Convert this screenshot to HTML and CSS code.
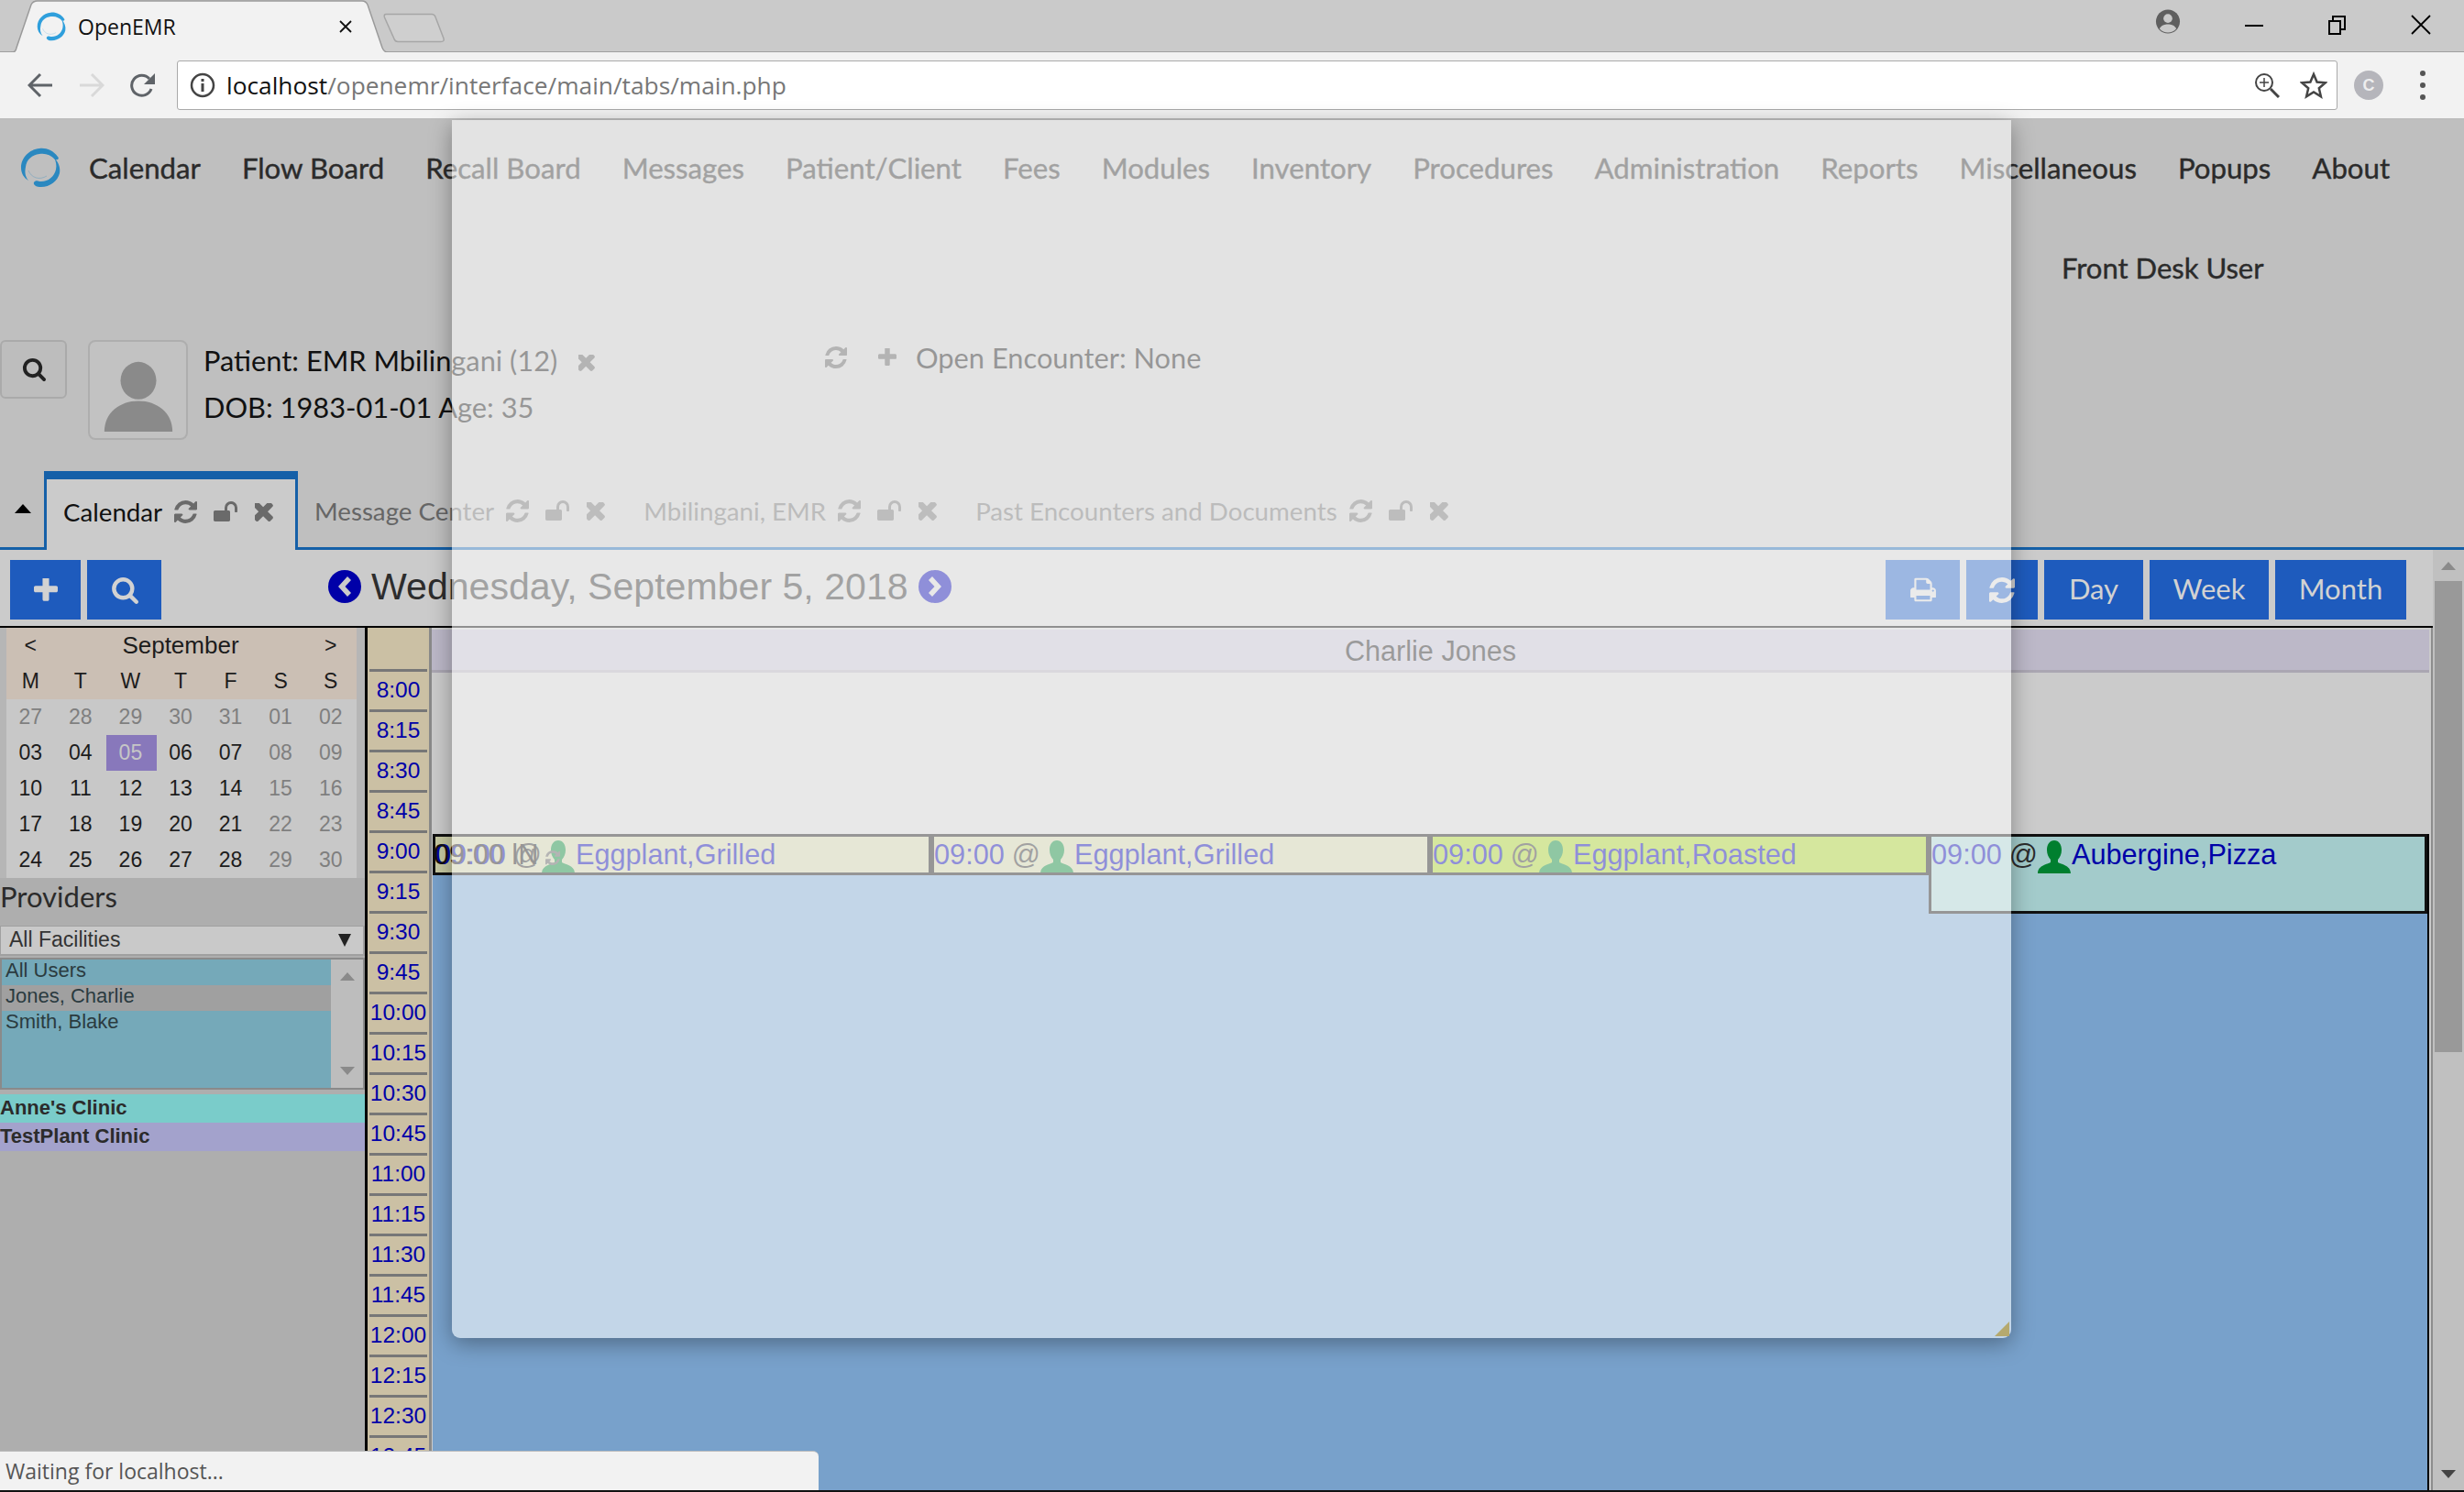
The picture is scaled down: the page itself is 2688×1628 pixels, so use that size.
FILE: index.html
```html
<!DOCTYPE html>
<html lang="en">
<head>
<meta charset="utf-8">
<title>OpenEMR</title>
<link rel="stylesheet" href="styles.css">
</head>
<body>
<svg class="defs" aria-hidden="true">
  <symbol id="i-refresh" viewBox="0 0 1536 1536"><path d="M1511 928q0 5-1 7-64 268-268 434.5t-478 166.5q-146 0-282.5-55t-243.5-157l-129 129q-19 19-45 19t-45-19-19-45v-448q0-26 19-45t45-19h448q26 0 45 19t19 45-19 45l-137 137q71 66 161 102t187 36q134 0 250-65t186-179q11-17 53-117 8-23 30-23h192q13 0 22.5 9.5t9.5 22.5zm25-800v448q0 26-19 45t-45 19h-448q-26 0-45-19t-19-45 19-45l138-138q-148-137-349-137-134 0-250 65t-186 179q-11 17-53 117-8 23-30 23h-199q-13 0-22.5-9.5t-9.5-22.5v-7q65-268 270-434.5t480-166.5q146 0 284 55.5t245 156.5l130-129q19-19 45-19t45 19 19 45z"/></symbol>
  <symbol id="i-unlock" viewBox="0 128 1728 1536"><path d="M1728 576v256q0 26-19 45t-45 19h-64q-26 0-45-19t-19-45v-256q0-106-75-181t-181-75-181 75-75 181v192h96q40 0 68 28t28 68v576q0 40-28 68t-68 28h-960q-40 0-68-28t-28-68v-576q0-40 28-68t68-28h672v-192q0-185 131.5-316.5t316.5-131.5 316.5 131.5 131.5 316.5z"/></symbol>
  <symbol id="i-times" viewBox="210 346 1088 1100"><path d="M1298 1214q0 40-28 68l-136 136q-28 28-68 28t-68-28l-294-294-294 294q-28 28-68 28t-68-28l-136-136q-28-28-28-68t28-68l294-294-294-294q-28-28-28-68t28-68l136-136q28-28 68-28t68 28l294 294 294-294q28-28 68-28t68 28l136 136q28 28 28 68t-28 68l-294 294 294 294q28 28 28 68z"/></symbol>
  <symbol id="i-plus" viewBox="192 192 1408 1408"><path d="M1600 736v192q0 40-28 68t-68 28h-416v416q0 40-28 68t-68 28h-192q-40 0-68-28t-28-68v-416h-416q-40 0-68-28t-28-68v-192q0-40 28-68t68-28h416v-416q0-40 28-68t68-28h192q40 0 68 28t28 68v416h416q40 0 68 28t28 68z"/></symbol>
  <symbol id="i-search" viewBox="0 64 1728 1728"><path d="M1216 832q0-185-131.5-316.5t-316.5-131.5-316.5 131.5-131.5 316.5 131.5 316.5 316.5 131.5 316.5-131.5 131.5-316.5zm512 832q0 52-38 90t-90 38q-54 0-90-38l-343-342q-179 124-399 124-143 0-273.5-55.5t-225-150-150-225-55.5-273.5 55.5-273.5 150-225 225-150 273.5-55.5 273.5 55.5 225 150 150 225 55.5 273.5q0 220-124 399l343 343q37 37 37 90z"/></symbol>
  <symbol id="i-print" viewBox="0 128 1792 1536"><path d="M448 1536h896v-256h-896v256zm0-640h896v-384h-160q-40 0-68-28t-28-68v-160h-640v640zm1152 64q0-26-19-45t-45-19-45 19-19 45 19 45 45 19 45-19 19-45zm128 0v416q0 13-9.5 22.5t-22.5 9.5h-224v160q0 40-28 68t-68 28h-960q-40 0-68-28t-28-68v-160h-224q-13 0-22.5-9.5t-9.5-22.5v-416q0-79 56.5-135.5t135.5-56.5h64v-544q0-40 28-68t68-28h672q40 0 88 20t76 48l152 152q28 28 48 76t20 88v256h64q79 0 135.5 56.5t56.5 135.5z"/></symbol>
  <symbol id="i-logo" viewBox="0 0 44 44"><path fill="currentColor" d="M41 10C36 3 28 0 21 1 10 2 1 11 1 22c0 6 3 11 8 14-4-5-4-10-3-15C7 13 13 8 21 7c7-1 12 1 17 6 3 1 5-1 3-3z"/><path fill="currentColor" d="M37 11c5 5 7 11 6 17-2 9-12 16-22 15-4 0-7-3-6-5 1-2 4-2 6-1 9 1 16-5 18-13 1-5 0-9-2-13z"/><path d="M9 25c3 8 12 11 20 6" fill="none" stroke="currentColor" stroke-width="1" opacity=".3"/></symbol>
  <symbol id="i-person" viewBox="0 0 36 36"><path d="M18 0c5 0 8 4.500 8 10.500 0 4-1.500 8-4 10.500v3c3 2 14 3 14 12H0c0-9 11-10 14-12v-3c-2.500-2.500-4-6.500-4-10.500C10 4.500 13 0 18 0z"/></symbol>
</svg>

<header class="chrome">
  <div class="tabstrip">
    <div class="ctab">
      <svg class="ctab-shape" viewBox="0 0 412 57" preserveAspectRatio="none"><path d="M0 57h2Q5 57 6 52L22 5Q24 1 29 1H383Q387 1 389 5L405 52Q407 57 411 57" fill="#f2f2f2" stroke="#9a9a9a" stroke-width="1.500"/></svg>
      <svg class="favicon"><use href="#i-logo"/></svg>
      <span class="ctab-title">OpenEMR</span>
      <svg class="ctab-close" viewBox="0 0 14 14"><path d="M1 1l12 12M13 1L1 13" stroke="#111" stroke-width="1.800" fill="none"/></svg>
    </div>
    <svg class="newtab" viewBox="0 0 68 33"><path d="M3 1.500H53Q56 1.500 57 4.500L66 28Q67 31.500 63 31.500H16Q13 31.500 12 28.500L1.500 5Q0.500 1.500 3 1.500z" fill="#cfcfcf" stroke="#a6a6a6" stroke-width="1.500"/></svg>
    <div class="winctl">
      <svg class="profile" viewBox="0 0 28 28"><circle cx="14" cy="14" r="13.500" fill="#5f5f5f"/><circle cx="14" cy="10.500" r="5" fill="#cacaca"/><path d="M4.500 22c2-4 6-5 9.500-5s7.500 1 9.500 5c-2.500 3-6 4.500-9.500 4.500s-7-1.500-9.500-4.500z" fill="#cacaca"/></svg>
      <svg class="wbtn" viewBox="0 0 22 22"><path d="M1 12h20" stroke="#000" stroke-width="2"/></svg>
      <svg class="wbtn" viewBox="0 0 22 22"><path d="M2 7h12v14H2zM6 7V2h13v14h-5" fill="none" stroke="#000" stroke-width="2"/></svg>
      <svg class="wbtn" viewBox="0 0 22 22"><path d="M1 1l20 20M21 1L1 21" stroke="#000" stroke-width="1.800"/></svg>
    </div>
  </div>
  <div class="toolbar">
    <svg class="nav-ico" viewBox="0 0 28 28"><path d="M27 14H3M14 2L2 14l12 12" fill="none" stroke="#5f6368" stroke-width="3"/></svg>
    <svg class="nav-ico" viewBox="0 0 28 28"><path d="M1 14h24M14 2l12 12-12 12" fill="none" stroke="#d9d9d9" stroke-width="3"/></svg>
    <svg class="nav-ico" viewBox="0 0 28 28"><path d="M23 18a11 11 0 1 1-2-11" fill="none" stroke="#5f6368" stroke-width="3"/><path d="M27 1v12H15z" fill="#5f6368"/></svg>
    <div class="omnibox">
      <svg class="info" viewBox="0 0 28 28"><circle cx="14" cy="14" r="12" fill="none" stroke="#444" stroke-width="2.500"/><path d="M12.500 7h3v3h-3zM12.500 12h3v9h-3z" fill="#444"/></svg>
      <span class="url"><span class="url-host">localhost</span>/openemr/interface/main/tabs/main.php</span>
      <svg class="zoomi" viewBox="0 0 28 28"><circle cx="11" cy="11" r="9" fill="none" stroke="#444" stroke-width="2"/><path d="M11 6v10M6 11h10" stroke="#444" stroke-width="1.500"/><path d="M18 18l9 9" stroke="#444" stroke-width="3"/></svg>
      <svg class="star" viewBox="0 0 30 30"><path d="M15 3l3.600 8.500 9.200.8-7 6 2.100 9L15 22.500l-7.900 4.800 2.100-9-7-6 9.200-.8z" fill="none" stroke="#444" stroke-width="2.500"/></svg>
    </div>
    <span class="ext">C</span>
    <span class="dots"><i></i><i></i><i></i></span>
  </div>
</header>

<div class="page">
  <nav class="mainnav">
    <svg class="logo"><use href="#i-logo"/></svg>
    <ul class="menu">
      <li>Calendar</li><li>Flow Board</li><li>Recall Board</li><li>Messages</li><li>Patient/Client</li><li>Fees</li><li>Modules</li><li>Inventory</li><li>Procedures</li><li>Administration</li><li>Reports</li><li>Miscellaneous</li><li>Popups</li><li>About</li>
    </ul>
  </nav>
  <div class="userrow">Front Desk User</div>
  <section class="patient">
    <button class="psearch"><svg class="ico ico-psearch"><use href="#i-search"/></svg></button>
    <div class="avatar">
      <svg viewBox="0 0 80 84"><ellipse cx="40" cy="24" rx="21" ry="22"/><path d="M0 84c0-22 18-36 40-36s40 14 40 36z"/></svg>
    </div>
    <div class="pinfo">
      <div class="pline">Patient: EMR Mbilingani (12)<svg class="ico ico-px"><use href="#i-times"/></svg></div>
      <div class="pline">DOB: 1983-01-01 Age: 35</div>
    </div>
    <div class="encounter">
      <svg class="ico ico-enc"><use href="#i-refresh"/></svg>
      <svg class="ico ico-enc-plus"><use href="#i-plus"/></svg>
      <span>Open Encounter: None</span>
    </div>
  </section>
  <div class="tabs">
    <span class="caret"></span>
    <div class="tab active">Calendar
      <svg class="ico ico-r"><use href="#i-refresh"/></svg><svg class="ico ico-l"><use href="#i-unlock"/></svg><svg class="ico ico-x"><use href="#i-times"/></svg>
    </div>
    <div class="tab">Message Center
      <svg class="ico ico-r"><use href="#i-refresh"/></svg><svg class="ico ico-l"><use href="#i-unlock"/></svg><svg class="ico ico-x"><use href="#i-times"/></svg>
    </div>
    <div class="tab">Mbilingani, EMR
      <svg class="ico ico-r"><use href="#i-refresh"/></svg><svg class="ico ico-l"><use href="#i-unlock"/></svg><svg class="ico ico-x"><use href="#i-times"/></svg>
    </div>
    <div class="tab">Past Encounters and Documents
      <svg class="ico ico-r"><use href="#i-refresh"/></svg><svg class="ico ico-l"><use href="#i-unlock"/></svg><svg class="ico ico-x"><use href="#i-times"/></svg>
    </div>
  </div>

  <div class="work">
    <div class="frame">
      <div class="calbar">
        <div class="btn-group">
          <button class="cbtn cbtn-add"><svg class="ico ico-plus"><use href="#i-plus"/></svg></button>
          <button class="cbtn cbtn-find"><svg class="ico ico-find"><use href="#i-search"/></svg></button>
        </div>
        <div class="datehead">
          <svg class="arrow" viewBox="0 0 36 36"><circle cx="18" cy="18" r="18" fill="#0000a8"/><path d="M21 7l-10 11 10 11 4-4-6.500-7 6.500-7z" fill="#cbcbcb"/></svg>
          <span class="datetext">Wednesday, September 5, 2018</span>
          <svg class="arrow" viewBox="0 0 36 36"><circle cx="18" cy="18" r="18" fill="#0000a8"/><path d="M15 7l10 11-10 11-4-4 6.500-7L11 11z" fill="#cbcbcb"/></svg>
        </div>
        <div class="btn-group btn-right">
          <button class="cbtn cbtn-print"><svg class="ico ico-print"><use href="#i-print"/></svg></button>
          <button class="cbtn cbtn-reload"><svg class="ico ico-reload"><use href="#i-refresh"/></svg></button>
          <button class="cbtn cbtn-text cbtn-day">Day</button>
          <button class="cbtn cbtn-text cbtn-week">Week</button>
          <button class="cbtn cbtn-text cbtn-month">Month</button>
        </div>
      </div>
      <div class="calbody">
        <aside class="sidebar">
          <div class="minical-wrap">
            <table class="minical">
              <thead>
                <tr class="mc-month"><th>&lt;</th><th colspan="5" class="mc-name">September</th><th>&gt;</th></tr>
                <tr class="mc-dow"><th>M</th><th>T</th><th>W</th><th>T</th><th>F</th><th>S</th><th>S</th></tr>
              </thead>
              <tbody>
                <tr><td class="dim">27</td><td class="dim">28</td><td class="dim">29</td><td class="dim">30</td><td class="dim">31</td><td class="dim">01</td><td class="dim">02</td></tr>
                <tr><td>03</td><td>04</td><td class="sel">05</td><td>06</td><td>07</td><td class="dim">08</td><td class="dim">09</td></tr>
                <tr><td>10</td><td>11</td><td>12</td><td>13</td><td>14</td><td class="dim">15</td><td class="dim">16</td></tr>
                <tr><td>17</td><td>18</td><td>19</td><td>20</td><td>21</td><td class="dim">22</td><td class="dim">23</td></tr>
                <tr><td>24</td><td>25</td><td>26</td><td>27</td><td>28</td><td class="dim">29</td><td class="dim">30</td></tr>
              </tbody>
            </table>
          </div>
          <div class="prov-title">Providers</div>
          <div class="fac-select">All Facilities<span class="sel-arrow"></span></div>
          <div class="listbox">
            <ul class="options">
              <li>All Users</li>
              <li class="opt-sel">Jones, Charlie</li>
              <li>Smith, Blake</li>
            </ul>
            <div class="lb-scroll"><span class="tri-up"></span><span class="tri-down"></span></div>
          </div>
          <div class="clinic clinic-a">Anne's Clinic</div>
          <div class="clinic clinic-b">TestPlant Clinic</div>
        </aside>
        <div class="times">
          <div class="slot-head"></div>
          <div class="slot">8:00</div><div class="slot">8:15</div><div class="slot">8:30</div><div class="slot">8:45</div>
          <div class="slot">9:00</div><div class="slot">9:15</div><div class="slot">9:30</div><div class="slot">9:45</div>
          <div class="slot">10:00</div><div class="slot">10:15</div><div class="slot">10:30</div><div class="slot">10:45</div>
          <div class="slot">11:00</div><div class="slot">11:15</div><div class="slot">11:30</div><div class="slot">11:45</div>
          <div class="slot">12:00</div><div class="slot">12:15</div><div class="slot">12:30</div><div class="slot">12:45</div>
        </div>
        <div class="day">
          <div class="day-head">Charlie Jones</div>
          <div class="day-blank"></div>
          <div class="day-grid">
            <div class="ev ev-a">
              <span class="ev-under">09:00 lN<svg class="ico ico-evr"><use href="#i-refresh"/></svg></span>
              <span class="ev-t">09:00</span> <span class="ev-at">@</span><svg class="evp"><use href="#i-person"/></svg><span class="ev-t">Eggplant,Grilled</span>
            </div>
            <div class="ev ev-a"><span class="ev-t">09:00</span> <span class="ev-at">@</span><svg class="evp"><use href="#i-person"/></svg><span class="ev-t">Eggplant,Grilled</span></div>
            <div class="ev ev-b"><span class="ev-t">09:00</span> <span class="ev-at">@</span><svg class="evp"><use href="#i-person"/></svg><span class="ev-t">Eggplant,Roasted</span></div>
            <div class="ev ev-c"><span class="ev-t">09:00</span> <span class="ev-at">@</span><svg class="evp"><use href="#i-person"/></svg><span class="ev-t">Aubergine,Pizza</span></div>
          </div>
        </div>
      </div>
    </div>
    <div class="vscroll">
      <span class="vs-up"></span>
      <span class="vs-thumb"></span>
      <span class="vs-down"></span>
    </div>
  </div>

  <div class="modal"><span class="grip"></span></div>
  <div class="status">Waiting for localhost...</div>
</div>
</body>
</html>
```
FILE: styles.css
```css
* { box-sizing: border-box; }
html, body { margin: 0; padding: 0; }
body { width: 2688px; height: 1628px; overflow: hidden; display: flex; flex-direction: column; font-family: "Lato", sans-serif; background: #000; }
.defs { display: none; }
.ico { display: block; fill: currentColor; flex: none; }
button { border: 0; padding: 0; margin: 0; font: inherit; }
ul { list-style: none; margin: 0; padding: 0; }

/* browser chrome */
.chrome { flex: none; height: 131px; }
.tabstrip { height: 57px; background: #cacaca; border-bottom: 1px solid #9f9f9f; display: flex; position: relative; padding-left: 12px; }
.ctab { position: relative; width: 412px; height: 57px; display: flex; align-items: center; padding: 0 40px 0 28px; }
.ctab-shape { position: absolute; left: 0; top: 0; width: 412px; height: 57px; }
.favicon { position: relative; width: 32px; height: 32px; color: #2f9fdc; }
.ctab-title { position: relative; margin-left: 13px; font: 23px "Open Sans", sans-serif; color: #111; flex: 1; }
.ctab-close { position: relative; width: 14px; height: 14px; }
.newtab { width: 68px; height: 33px; margin: 14px 0 0 -6px; }
.winctl { margin-left: auto; display: flex; align-items: flex-start; padding: 10px 36px 0 0; }
.profile { width: 28px; height: 27px; margin-right: 69px; }
.wbtn { width: 22px; height: 22px; margin: 6px 0 0 69px; }
.profile + .wbtn { margin-left: 0; }
.toolbar { height: 74px; background: #f2f2f2; border-bottom: 2px solid #bdbdbd; display: flex; align-items: center; padding: 0 0 0 30px; }
.nav-ico { width: 28px; height: 28px; margin-right: 28px; flex: none; }
.omnibox { width: 2357px; height: 54px; margin-left: -5px; background: #fff; border: 1px solid #a9a9a9; border-radius: 3px; display: flex; align-items: center; padding: 0 10px 0 13px; }
.info { width: 28px; height: 28px; flex: none; }
.url { margin-left: 12px; font: 26.300px "Open Sans", sans-serif; color: #777; flex: 1; white-space: nowrap; }
.url-host { color: #111; }
.zoomi { width: 28px; height: 28px; flex: none; }
.star { width: 30px; height: 30px; margin-left: 22px; flex: none; }
.ext { width: 32px; height: 32px; border-radius: 50%; background: #b5b5bb; color: #eee; font: bold 18px/32px "Liberation Sans", sans-serif; text-align: center; margin-left: 18px; flex: none; }
.dots { display: flex; flex-direction: column; gap: 7px; margin-left: 40px; }
.dots i { width: 6px; height: 6px; border-radius: 50%; background: #555; display: block; }

/* page */
.page { flex: 1; position: relative; background: #bfbfbf; display: flex; flex-direction: column; border-bottom: 2px solid #111; min-height: 0; }
.mainnav { flex: none; height: 104px; display: flex; align-items: center; padding-left: 22px; }
.logo { width: 44px; height: 44px; color: #2a88c0; flex: none; }
.menu { display: flex; gap: 45px; margin-left: 31px; }
.menu li { font-size: 31.200px; color: #2b2b2b; white-space: nowrap; -webkit-text-stroke: .4px #2b2b2b; }
.userrow { flex: none; height: 116px; line-height: 114px; padding-left: 2249px; font-size: 31px; color: #2b2b2b; -webkit-text-stroke: .4px #2b2b2b; }
.patient { flex: none; height: 163px; display: flex; align-items: flex-start; padding-top: 20px; }
.psearch { width: 73px; height: 64px; background: #bdbdbd; border: 2px solid #aaa; border-radius: 6px; display: flex; align-items: center; justify-content: center; color: #222; }
.ico-psearch { width: 26px; height: 26px; }
.avatar { width: 109px; height: 109px; margin-left: 23px; border: 2px solid #aeaeae; border-radius: 8px; background: #c2c2c2; padding: 20px 14px 8px; }
.avatar svg { display: block; width: 78px; height: 78px; fill: #8a8a8a; }
.pinfo { margin: -3px 0 0 17px; width: 678px; }
.pline { font-size: 30.800px; color: #111; height: 51px; line-height: 46px; display: flex; align-items: center; }
.ico-px { width: 18px; height: 18px; margin-left: 23px; color: #555; margin-top: 4px; }
.encounter { display: flex; align-items: center; font-size: 30.800px; color: #111; height: 42px; margin-top: -2px; }
.ico-enc { width: 24px; height: 24px; color: #555; }
.ico-enc-plus { width: 20px; height: 20px; color: #555; margin-left: 34px; }
.encounter span { margin-left: 21px; }

.tabs { flex: none; height: 86px; display: flex; align-items: flex-start; border-bottom: 3px solid #1560a8; padding-left: 16px; position: relative; }
.caret { width: 0; height: 0; border: 9px solid transparent; border-top: 0; border-bottom: 10px solid #000; margin: 36px 14px 0 0; }
.tab { display: flex; align-items: center; font-size: 27.700px; color: #666; height: 84px; padding: 3px 0 0 0; margin-right: 42px; white-space: nowrap; }
.tab .ico { color: #6a6a6a; }
.tab.active { background: #cbcbcb; border: 3px solid #1560a8; border-top-width: 9px; border-bottom: 0; height: 86px; width: 277px; color: #111; padding: 0 0 6px 18px; margin-right: 18px; }
.ico-r { width: 25px; height: 25px; margin-left: 13px; }
.ico-l { width: 27px; height: 24px; margin-left: 17px; }
.ico-x { width: 20px; height: 20px; margin-left: 19px; }

.work { flex: 1; display: flex; min-height: 0; }
.frame { flex: 1; display: flex; flex-direction: column; min-width: 0; background: #cbcbcb; }
.calbar { flex: none; height: 85px; border-bottom: 2px solid #000; display: flex; align-items: flex-start; padding: 11px 29px 0 11px; }
.btn-group { display: flex; gap: 7px; }
.btn-right { margin-left: auto; }
.cbtn { height: 65px; background: #1e5bbd; color: #d2d2d2; font: 31px "Lato", sans-serif; display: flex; align-items: center; justify-content: center; }
.cbtn-text { padding-bottom: 4px; }
.cbtn-add { width: 77px; }
.cbtn-find { width: 81px; }
.cbtn-print { width: 81px; }
.cbtn-reload { width: 78px; }
.cbtn-day { width: 108px; }
.cbtn-week { width: 130px; }
.cbtn-month { width: 143px; }
.ico-plus { width: 26px; height: 26px; }
.ico-find { width: 30px; height: 30px; }
.ico-print { width: 30px; height: 27px; }
.ico-reload { width: 28px; height: 28px; }
.datehead { display: flex; align-items: center; height: 58px; margin-left: 182px; gap: 11px; }
.arrow { width: 36px; height: 36px; flex: none; }
.datetext { font: 41.100px "Liberation Sans", sans-serif; color: #2d2d2d; white-space: nowrap; }

.calbody { flex: 1; display: flex; min-height: 0; }
.sidebar { flex: none; width: 398px; background: #aeaeae; display: flex; flex-direction: column; font-family: "Liberation Sans", sans-serif; }
.minical-wrap { background: #b6b6b6; padding: 0 9px 0 7px; }
.minical { width: 100%; border-collapse: collapse; table-layout: fixed; font-size: 23px; color: #1c1c1c; }
.minical th { font-weight: 400; background: #cbbfb4; padding: 0 2px 0 0; }
.minical .mc-name { font-size: 26px; }
.mc-month th { height: 39px; }
.mc-dow th { height: 39px; }
.minical td { height: 39px; padding: 0 2px 0 0; text-align: center; background: #c8c8c8; }
.minical td.dim { color: #7f7f7f; }
.minical td.sel { background: #8878bb; color: #c6c6c6; }
.prov-title { font: 31px/36px "Lato", sans-serif; color: #2b2b2b; height: 52px; padding-top: 2px; }
.fac-select { height: 33px; background: #c9c9c9; border: 2px solid #a0a0a0; border-left-width: 1px; border-top-width: 1px; font-size: 23px; line-height: 29px; padding-left: 9px; color: #333; position: relative; }
.sel-arrow { position: absolute; right: 13px; top: 8px; width: 0; height: 0; border: 7px solid transparent; border-bottom: 0; border-top: 14px solid #222; }
.listbox { height: 144px; margin-top: 2px; border: 2px solid #8a8a8a; background: #75a9b9; display: flex; }
.options { flex: 1; font-size: 22px; color: #2b3b40; }
.options li { height: 28px; line-height: 23px; padding-left: 4px; }
.options li.opt-sel { background: #a0a0a0; }
.lb-scroll { width: 35px; background: #bdbdbd; display: flex; flex-direction: column; justify-content: space-between; align-items: center; padding: 14px 0 14px; }
.tri-up { width: 0; height: 0; border: 8px solid transparent; border-top: 0; border-bottom: 9px solid #8a8a8a; }
.tri-down { width: 0; height: 0; border: 8px solid transparent; border-bottom: 0; border-top: 9px solid #8a8a8a; }
.clinic { height: 31px; line-height: 30px; font-size: 22px; font-weight: 700; color: #2b2b2b; }
.clinic-a { background: #7accca; margin-top: 5px; }
.clinic-b { background: #a3a2cc; }

.times { flex: none; width: 73px; background: #cbc0a4; border-left: 3px solid #000; border-right: 3px solid #8a8a8a; overflow: hidden; font: 24.500px "Liberation Sans", sans-serif; color: #0000a8; padding: 0 2px; }
.slot-head { height: 48px; border-bottom: 3px solid #777; }
.slot { height: 44px; line-height: 40px; border-bottom: 3px solid #777; text-align: center; white-space: nowrap; }
.day { flex: 1; min-width: 0; display: flex; flex-direction: column; background: #cbcbcb; font-family: "Liberation Sans", sans-serif; padding-right: 2px; border-right: 2px solid #8d8d8d; }
.day-head { flex: none; height: 47px; margin-top: 2px; padding-bottom: 2px; background: #bcb8c8; border-bottom: 3px solid #aaa6b2; text-align: center; font-size: 30.600px; line-height: 46px; color: #1a1a1a; }
.day-blank { flex: none; height: 176px; }
.day-grid { flex: 1; background: #78a1cb; display: flex; align-items: flex-start; margin-left: 1px; border-right: 2px solid #000; }
.ev { position: relative; flex: 1 1 0; height: 45px; border: 3px solid #111; font-size: 30.700px; line-height: 40px; padding-left: 0; white-space: nowrap; color: #2b2b2b; overflow: hidden; display: flex; align-items: flex-start; }
.ev-a { background: #c6c8a1; }
.ev-b { background: #9fc822; }
.ev-c { background: #a3cbcb; height: 87px; }
.ev-t { color: #0000a8; }
.ev-at { margin-left: 8px; }
.evp { width: 36px; height: 36px; fill: #007f2f; margin-top: 4px; flex: none; }
.evp + .ev-t { margin-left: 1px; }
.ev-under { position: absolute; left: -2px; top: 0; color: #111; display: flex; align-items: center; height: 40px; }
.ico-evr { width: 16px; height: 16px; color: #555; margin-left: 8px; margin-top: 6px; }

.vscroll { flex: none; width: 34px; background: #c0c0c0; display: flex; flex-direction: column; align-items: center; position: relative; }
.vs-up { width: 0; height: 0; border: 8px solid transparent; border-top: 0; border-bottom: 9px solid #8a8a8a; margin-top: 13px; }
.vs-thumb { width: 30px; height: 514px; background: #999; margin-top: 12px; }
.vs-down { width: 0; height: 0; border: 8px solid transparent; border-bottom: 0; border-top: 9px solid #444; margin-top: auto; margin-bottom: 13px; }

/* dialog and status bubble float over the page */
.modal { position: absolute; left: 493px; top: 0; width: 1701px; height: 1329px; background: rgba(255,255,255,.56); border-radius: 0 0 9px 9px; box-shadow: 0 6px 24px rgba(0,0,0,.35); }
.grip { position: absolute; right: 2px; bottom: 2px; width: 16px; height: 16px; background: #b5a96e; clip-path: polygon(100% 0, 100% 100%, 0 100%); }
.status { position: absolute; left: 0; bottom: 0; width: 893px; height: 43px; background: #f2f2f2; border-radius: 0 6px 0 0; border-top: 1px solid #bdbdbd; font: 23px/42px "Open Sans", sans-serif; color: #555; padding-left: 6px; }
```
